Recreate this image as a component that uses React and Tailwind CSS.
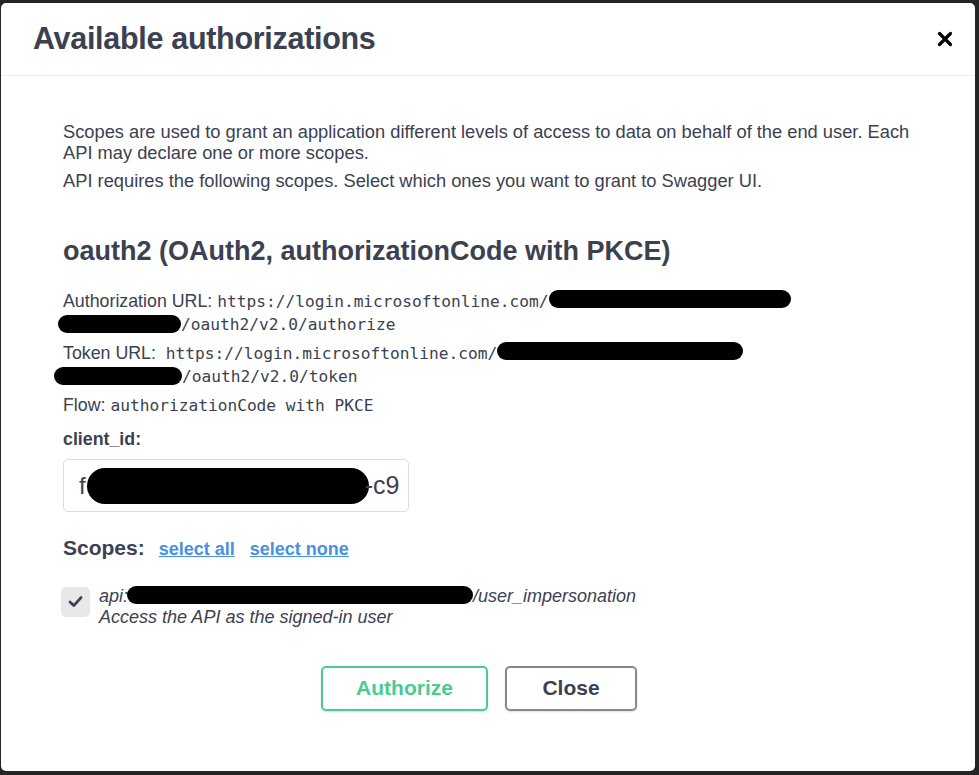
const Blob = ({ w, className = "" }) => (
  <span className={`inline-block h-[18px] rounded-full bg-black align-middle ${w} ${className}`} />
);

const mono = "font-['DejaVu_Sans_Mono',monospace] text-[16.2px]";

const App = () => {
  return (
    <div className="h-[775px] w-[979px] bg-[#252525] pt-[3px] pl-[1px] pr-[4px] pb-[4px] font-['Liberation_Sans',Arial,sans-serif] text-[#3b4151]">
      <div className="flex h-[768px] flex-col rounded-[5px] bg-white">
        <div className="flex h-[73px] items-center justify-between border-b border-[#ececec] pl-[32px] pr-[18px]">
          <h3 className="text-[30.5px] font-bold tracking-[-0.3px] text-[#3b4151]">Available authorizations</h3>
          <button className="flex h-6 w-6 items-center justify-center">
            <svg width="18" height="18" viewBox="0 0 18 18">
              <path d="M3.5 3.5 L14.5 14.5 M14.5 3.5 L3.5 14.5" stroke="#000" strokeWidth="3.2" strokeLinecap="round" />
            </svg>
          </button>
        </div>

        <div className="flex flex-col pl-[62px] pr-[40px] pt-[45px]">
          <p className="text-[18.3px] leading-[21px]">
            Scopes are used to grant an application different levels of access to data on behalf of the end user. Each API may declare one or more scopes.
          </p>
          <p className="mt-[7px] text-[18.3px] leading-[21px]">
            API requires the following scopes. Select which ones you want to grant to Swagger UI.
          </p>

          <h4 className="mt-[45px] text-[27px] font-bold leading-[30px]">oauth2 (OAuth2, authorizationCode with PKCE)</h4>

          <div className="mt-[24px] flex flex-col text-[17.8px]">
            <div className="leading-[23px]">
              Authorization URL: <code className={mono}>https://login.microsoftonline.com/</code>
              <Blob w="w-[242px]" className="-mt-[6px]" />
            </div>
            <div className="leading-[23px]">
              <Blob w="w-[123px]" className="-ml-[5px] -mt-[3px]" />
              <code className={mono}>/oauth2/v2.0/authorize</code>
            </div>
            <div className="mt-[6px] leading-[23px]">
              Token URL:{" "}
              <code className={`${mono} ml-[5px]`}>https://login.microsoftonline.com/</code>
              <Blob w="w-[246px]" className="-mt-[6px]" />
            </div>
            <div className="leading-[23px]">
              <Blob w="w-[128px]" className="-ml-[9px] -mt-[3px]" />
              <code className={mono}>/oauth2/v2.0/token</code>
            </div>
            <div className="mt-[6px] leading-[23px]">
              Flow: <code className={mono}>authorizationCode with PKCE</code>
            </div>
          </div>

          <label className="mt-[11px] text-[17.8px] font-bold leading-[23px]">client_id:</label>
          <div className="mt-[8px] flex h-[53px] w-[346px] items-center overflow-hidden rounded-[5px] border border-[#dcdcdc] pl-[15px]">
            <span className="text-[24px]">f</span>
            <span className="ml-[1px] inline-block h-[36px] w-[282px] shrink-0 rounded-full bg-black" />
            <span className="-ml-[4px] shrink-0 text-[25px]">-c9</span>
          </div>

          <div className="mt-[20px] flex items-baseline">
            <span className="text-[21px] font-bold">Scopes:</span>
            <a className="ml-[14px] text-[18px] font-bold text-[#4990e2] underline">select all</a>
            <a className="ml-[15px] text-[18px] font-bold text-[#4990e2] underline">select none</a>
          </div>

          <div className="mt-[22px] -ml-[2px] flex items-start">
            <div className="mt-[1px] flex h-[30px] w-[29px] items-center justify-center rounded-[5px] bg-[#e8e8e8]">
              <svg width="15" height="13" viewBox="0 0 15 13">
                <path d="M2 7 L5.8 10.6 L13 2.6" stroke="#3b4151" strokeWidth="2.8" fill="none" strokeLinecap="round" strokeLinejoin="round" />
              </svg>
            </div>
            <div className="ml-[9px] flex flex-col text-[18px] italic leading-[21px]">
              <div>
                api:
                <Blob w="w-[346px]" className="-ml-[1px] -mt-[3px]" />
                /user_impersonation
              </div>
              <div>Access the API as the signed-in user</div>
            </div>
          </div>

          <div className="mt-[38px] flex justify-center gap-[17px] pr-[40px]">
            <button className="h-[45px] w-[167px] rounded-[5px] border-2 border-[#49cc90] text-[21px] font-bold text-[#49cc90] shadow-[0_1px_2px_rgba(0,0,0,0.15)]">
              Authorize
            </button>
            <button className="h-[45px] w-[132px] rounded-[5px] border-2 border-[#888888] text-[21px] font-bold text-[#3b4151] shadow-[0_1px_2px_rgba(0,0,0,0.15)]">
              Close
            </button>
          </div>
        </div>
      </div>
    </div>
  );
};

export default App;
